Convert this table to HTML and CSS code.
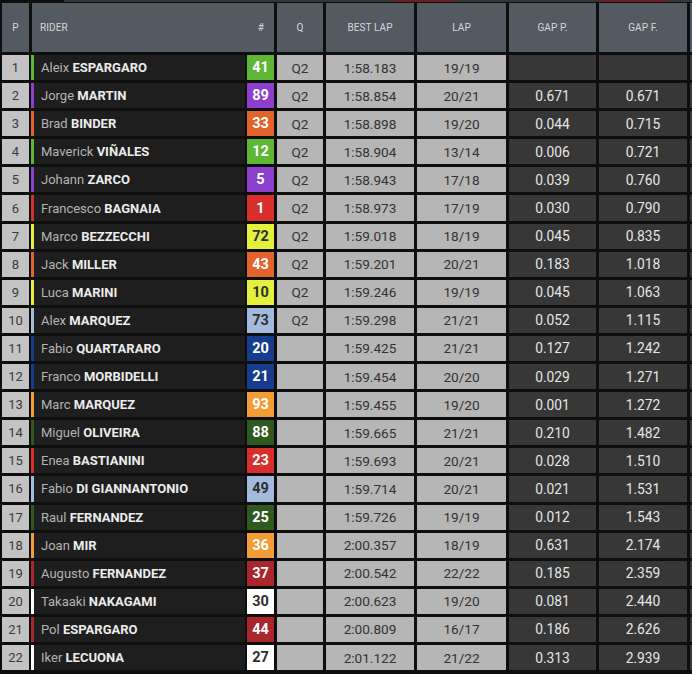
FILE: index.html
```html
<!DOCTYPE html>
<html>
<head>
<meta charset="utf-8">
<link rel="stylesheet" href="styles.css">
</head>
<body>
<div class="page">
  <div class="topstrip"><span class="frag f1"></span><span class="frag f2"></span></div>
  <div class="table">
    <div class="row head">
      <div class="cell h">P</div>
      <div class="cell h rider-h"><span>RIDER</span><span class="hash">#</span></div>
      <div class="cell h">Q</div>
      <div class="cell h">BEST LAP</div>
      <div class="cell h">LAP</div>
      <div class="cell h">GAP P.</div>
      <div class="cell h">GAP F.</div>
      <div class="cell h"></div>
    </div>

    <div class="row t-aprilia"><div class="cell pos">1</div><div class="rider"><span class="bar"></span><span class="name">Aleix <b>ESPARGARO</b></span><span class="num">41</span></div><div class="cell lt">Q2</div><div class="cell lt">1:58.183</div><div class="cell lt">19/19</div><div class="cell dk"></div><div class="cell dk"></div><div class="cell dk"></div></div>
    <div class="row t-pramac"><div class="cell pos">2</div><div class="rider"><span class="bar"></span><span class="name">Jorge <b>MARTIN</b></span><span class="num">89</span></div><div class="cell lt">Q2</div><div class="cell lt">1:58.854</div><div class="cell lt">20/21</div><div class="cell dk">0.671</div><div class="cell dk">0.671</div><div class="cell dk"></div></div>
    <div class="row t-ktm"><div class="cell pos">3</div><div class="rider"><span class="bar"></span><span class="name">Brad <b>BINDER</b></span><span class="num">33</span></div><div class="cell lt">Q2</div><div class="cell lt">1:58.898</div><div class="cell lt">19/20</div><div class="cell dk">0.044</div><div class="cell dk">0.715</div><div class="cell dk"></div></div>
    <div class="row t-aprilia"><div class="cell pos">4</div><div class="rider"><span class="bar"></span><span class="name">Maverick <b>VIÑALES</b></span><span class="num">12</span></div><div class="cell lt">Q2</div><div class="cell lt">1:58.904</div><div class="cell lt">13/14</div><div class="cell dk">0.006</div><div class="cell dk">0.721</div><div class="cell dk"></div></div>
    <div class="row t-pramac"><div class="cell pos">5</div><div class="rider"><span class="bar"></span><span class="name">Johann <b>ZARCO</b></span><span class="num">5</span></div><div class="cell lt">Q2</div><div class="cell lt">1:58.943</div><div class="cell lt">17/18</div><div class="cell dk">0.039</div><div class="cell dk">0.760</div><div class="cell dk"></div></div>
    <div class="row t-ducati"><div class="cell pos">6</div><div class="rider"><span class="bar"></span><span class="name">Francesco <b>BAGNAIA</b></span><span class="num">1</span></div><div class="cell lt">Q2</div><div class="cell lt">1:58.973</div><div class="cell lt">17/19</div><div class="cell dk">0.030</div><div class="cell dk">0.790</div><div class="cell dk"></div></div>
    <div class="row t-vr46"><div class="cell pos">7</div><div class="rider"><span class="bar"></span><span class="name">Marco <b>BEZZECCHI</b></span><span class="num">72</span></div><div class="cell lt">Q2</div><div class="cell lt">1:59.018</div><div class="cell lt">18/19</div><div class="cell dk">0.045</div><div class="cell dk">0.835</div><div class="cell dk"></div></div>
    <div class="row t-ktm"><div class="cell pos">8</div><div class="rider"><span class="bar"></span><span class="name">Jack <b>MILLER</b></span><span class="num">43</span></div><div class="cell lt">Q2</div><div class="cell lt">1:59.201</div><div class="cell lt">20/21</div><div class="cell dk">0.183</div><div class="cell dk">1.018</div><div class="cell dk"></div></div>
    <div class="row t-vr46"><div class="cell pos">9</div><div class="rider"><span class="bar"></span><span class="name">Luca <b>MARINI</b></span><span class="num">10</span></div><div class="cell lt">Q2</div><div class="cell lt">1:59.246</div><div class="cell lt">19/19</div><div class="cell dk">0.045</div><div class="cell dk">1.063</div><div class="cell dk"></div></div>
    <div class="row t-gresini"><div class="cell pos">10</div><div class="rider"><span class="bar"></span><span class="name">Alex <b>MARQUEZ</b></span><span class="num">73</span></div><div class="cell lt">Q2</div><div class="cell lt">1:59.298</div><div class="cell lt">21/21</div><div class="cell dk">0.052</div><div class="cell dk">1.115</div><div class="cell dk"></div></div>
    <div class="row t-yamaha"><div class="cell pos">11</div><div class="rider"><span class="bar"></span><span class="name">Fabio <b>QUARTARARO</b></span><span class="num">20</span></div><div class="cell lt"></div><div class="cell lt">1:59.425</div><div class="cell lt">21/21</div><div class="cell dk">0.127</div><div class="cell dk">1.242</div><div class="cell dk"></div></div>
    <div class="row t-yamaha"><div class="cell pos">12</div><div class="rider"><span class="bar"></span><span class="name">Franco <b>MORBIDELLI</b></span><span class="num">21</span></div><div class="cell lt"></div><div class="cell lt">1:59.454</div><div class="cell lt">20/20</div><div class="cell dk">0.029</div><div class="cell dk">1.271</div><div class="cell dk"></div></div>
    <div class="row t-honda"><div class="cell pos">13</div><div class="rider"><span class="bar"></span><span class="name">Marc <b>MARQUEZ</b></span><span class="num">93</span></div><div class="cell lt"></div><div class="cell lt">1:59.455</div><div class="cell lt">19/20</div><div class="cell dk">0.001</div><div class="cell dk">1.272</div><div class="cell dk"></div></div>
    <div class="row t-rnf"><div class="cell pos">14</div><div class="rider"><span class="bar"></span><span class="name">Miguel <b>OLIVEIRA</b></span><span class="num">88</span></div><div class="cell lt"></div><div class="cell lt">1:59.665</div><div class="cell lt">21/21</div><div class="cell dk">0.210</div><div class="cell dk">1.482</div><div class="cell dk"></div></div>
    <div class="row t-ducati"><div class="cell pos">15</div><div class="rider"><span class="bar"></span><span class="name">Enea <b>BASTIANINI</b></span><span class="num">23</span></div><div class="cell lt"></div><div class="cell lt">1:59.693</div><div class="cell lt">20/21</div><div class="cell dk">0.028</div><div class="cell dk">1.510</div><div class="cell dk"></div></div>
    <div class="row t-gresini"><div class="cell pos">16</div><div class="rider"><span class="bar"></span><span class="name">Fabio <b>DI GIANNANTONIO</b></span><span class="num">49</span></div><div class="cell lt"></div><div class="cell lt">1:59.714</div><div class="cell lt">20/21</div><div class="cell dk">0.021</div><div class="cell dk">1.531</div><div class="cell dk"></div></div>
    <div class="row t-rnf"><div class="cell pos">17</div><div class="rider"><span class="bar"></span><span class="name">Raul <b>FERNANDEZ</b></span><span class="num">25</span></div><div class="cell lt"></div><div class="cell lt">1:59.726</div><div class="cell lt">19/19</div><div class="cell dk">0.012</div><div class="cell dk">1.543</div><div class="cell dk"></div></div>
    <div class="row t-honda"><div class="cell pos">18</div><div class="rider"><span class="bar"></span><span class="name">Joan <b>MIR</b></span><span class="num">36</span></div><div class="cell lt"></div><div class="cell lt">2:00.357</div><div class="cell lt">18/19</div><div class="cell dk">0.631</div><div class="cell dk">2.174</div><div class="cell dk"></div></div>
    <div class="row t-tech3"><div class="cell pos">19</div><div class="rider"><span class="bar"></span><span class="name">Augusto <b>FERNANDEZ</b></span><span class="num">37</span></div><div class="cell lt"></div><div class="cell lt">2:00.542</div><div class="cell lt">22/22</div><div class="cell dk">0.185</div><div class="cell dk">2.359</div><div class="cell dk"></div></div>
    <div class="row t-lcr"><div class="cell pos">20</div><div class="rider"><span class="bar"></span><span class="name">Takaaki <b>NAKAGAMI</b></span><span class="num">30</span></div><div class="cell lt"></div><div class="cell lt">2:00.623</div><div class="cell lt">19/20</div><div class="cell dk">0.081</div><div class="cell dk">2.440</div><div class="cell dk"></div></div>
    <div class="row t-tech3"><div class="cell pos">21</div><div class="rider"><span class="bar"></span><span class="name">Pol <b>ESPARGARO</b></span><span class="num">44</span></div><div class="cell lt"></div><div class="cell lt">2:00.809</div><div class="cell lt">16/17</div><div class="cell dk">0.186</div><div class="cell dk">2.626</div><div class="cell dk"></div></div>
    <div class="row t-lcr"><div class="cell pos">22</div><div class="rider"><span class="bar"></span><span class="name">Iker <b>LECUONA</b></span><span class="num">27</span></div><div class="cell lt"></div><div class="cell lt">2:01.122</div><div class="cell lt">21/22</div><div class="cell dk">0.313</div><div class="cell dk">2.939</div><div class="cell dk"></div></div>
  </div>
</div>
</body>
</html>
```

FILE: styles.css
```css
html, body {
  margin: 0;
  padding: 0;
  background: #0e0e0e;
  overflow: hidden;
}
.page {
  width: 692px;
  height: 674px;
  overflow: hidden;
  font-family: Roboto, "Liberation Sans", sans-serif;
}
.topstrip {
  height: 2px;
  margin-left: 64px;
  margin-bottom: 1px;
  background: #35373a;
  display: flex;
}
.frag {
  height: 2px;
  background: #6a1f22;
}
.f1 { margin-left: 330px; width: 60px; }
.f2 { margin-left: 145px; width: 68px; }
.table {
  display: flex;
  flex-direction: column;
  gap: 3px;
  padding-left: 2px;
}
.row {
  display: grid;
  grid-template-columns: 27px 242px 46px 88px 89px 87px 88px 40px;
  column-gap: 3px;
  height: 25.1px;
}
.row.head {
  height: 49px;
}
.cell {
  display: flex;
  align-items: center;
  justify-content: center;
  font-size: 13px;
}
.h {
  background: #535a61;
  color: #d3d7db;
  font-size: 10px;
  letter-spacing: 0.1px;
}
.rider-h {
  justify-content: space-between;
  padding: 0 10px 0 8px;
}
.pos {
  background: #c3c3c3;
  color: #3a3a3a;
}
.lt {
  background: #b6b6b6;
  color: #333;
  font-size: 13.6px;
}
.dk {
  background: #373737;
  color: #e6e6e6;
  font-size: 13.8px;
}
.rider {
  display: flex;
  align-items: stretch;
  margin-left: -1px;
}
.bar {
  width: 3px;
  background: var(--team);
}
.name {
  flex: 1;
  background: #1e1e1e;
  color: #b4b4b4;
  font-size: 13px;
  display: flex;
  align-items: center;
  padding-left: 7px;
  margin-right: 2px;
  white-space: pre;
}
.name b {
  color: #ececec;
  font-weight: 700;
}
.num {
  width: 27px;
  background: var(--team);
  color: var(--numtext, #fff);
  font-weight: 700;
  font-size: 14.5px;
  display: flex;
  align-items: center;
  justify-content: center;
}
.t-aprilia { --team: #5db634; }
.t-pramac  { --team: #8b3fcc; }
.t-ktm     { --team: #e2632c; }
.t-ducati  { --team: #d92f2c; }
.t-vr46    { --team: #e3f03c; --numtext: #2e2e2e; }
.t-gresini { --team: #a2bbdd; --numtext: #2e2e2e; }
.t-yamaha  { --team: #163c8d; }
.t-honda   { --team: #f29d36; }
.t-rnf     { --team: #2f5a1f; }
.t-tech3   { --team: #a8262c; }
.t-lcr     { --team: #ffffff; --numtext: #2e2e2e; }
```
